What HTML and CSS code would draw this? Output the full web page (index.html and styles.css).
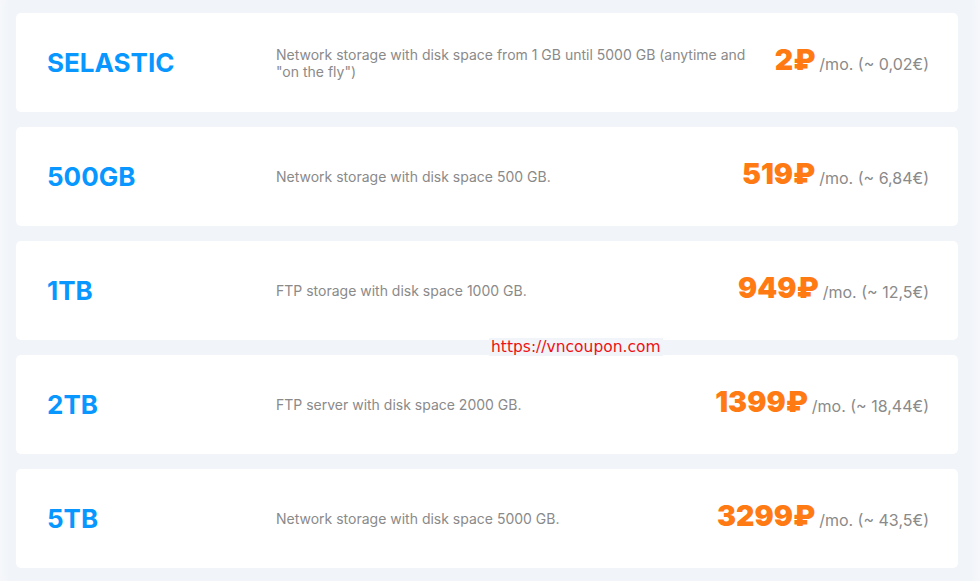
FILE: index.html
```html
<!DOCTYPE html>
<html lang="en">
<head>
<meta charset="utf-8">
<link rel="stylesheet" href="styles.css">
</head>
<body>
<div class="page">
  <div class="list">
    <div class="card">
      <div class="name">SELASTIC</div>
      <div class="desc">Network storage with disk space from 1 GB until 5000 GB (anytime and "on the fly")</div>
      <div class="price"><span class="amount">2₽</span> <span class="per">/mo. (~ 0,02€)</span></div>
    </div>
    <div class="card">
      <div class="name">500GB</div>
      <div class="desc">Network storage with disk space 500 GB.</div>
      <div class="price"><span class="amount">519₽</span> <span class="per">/mo. (~ 6,84€)</span></div>
    </div>
    <div class="card">
      <div class="name">1TB</div>
      <div class="desc">FTP storage with disk space 1000 GB.</div>
      <div class="price"><span class="amount">949₽</span> <span class="per">/mo. (~ 12,5€)</span></div>
    </div>
    <div class="card">
      <div class="name">2TB</div>
      <div class="desc">FTP server with disk space 2000 GB.</div>
      <div class="price"><span class="amount">1399₽</span> <span class="per">/mo. (~ 18,44€)</span></div>
    </div>
    <div class="card">
      <div class="name">5TB</div>
      <div class="desc">Network storage with disk space 5000 GB.</div>
      <div class="price"><span class="amount">3299₽</span> <span class="per">/mo. (~ 43,5€)</span></div>
    </div>
  </div>
  <div class="watermark">https://vncoupon.com</div>
</div>
</body>
</html>
```
FILE: styles.css
```css
html, body {
  margin: 0;
  padding: 0;
}
body {
  background: #f6f8fb;
  width: 980px;
  height: 581px;
  overflow: hidden;
  font-family: Inter, "Noto Sans", sans-serif;
}
.page {
  position: relative;
  margin: 0 8px;
  height: 581px;
  background: #f1f4f8;
  box-shadow: 0 0 10px 4px #f1f4f8;
}
.list {
  display: flex;
  flex-direction: column;
  gap: 15px;
  padding: 13px 14px 0 8px;
}
.card {
  background: #ffffff;
  border-radius: 5px;
  height: 99px;
  box-sizing: border-box;
  padding: 0 29px 0 31px;
  display: grid;
  grid-template-columns: 229px 1fr auto;
  column-gap: 24px;
  align-items: center;
}
.name {
  color: #0897ff;
  font-weight: 700;
  font-size: 26px;
}
.desc {
  color: #8a8a8a;
  font-size: 14px;
  line-height: 17px;
  margin-left: -24px;
}
.price {
  white-space: nowrap;
  display: flex;
  align-items: baseline;
  gap: 4px;
  margin-bottom: 6px;
}
.amount {
  color: #ff7a12;
  font-weight: 900;
  font-size: 28.5px;
}
.per {
  color: #8a8a8a;
  font-size: 16px;
}
.watermark {
  position: absolute;
  left: 481px;
  top: 338px;
  color: #ee1111;
  font-family: "DejaVu Sans", sans-serif;
  font-size: 15.5px;
  background: #f1f4f8;
  padding: 0 2px;
}
```
